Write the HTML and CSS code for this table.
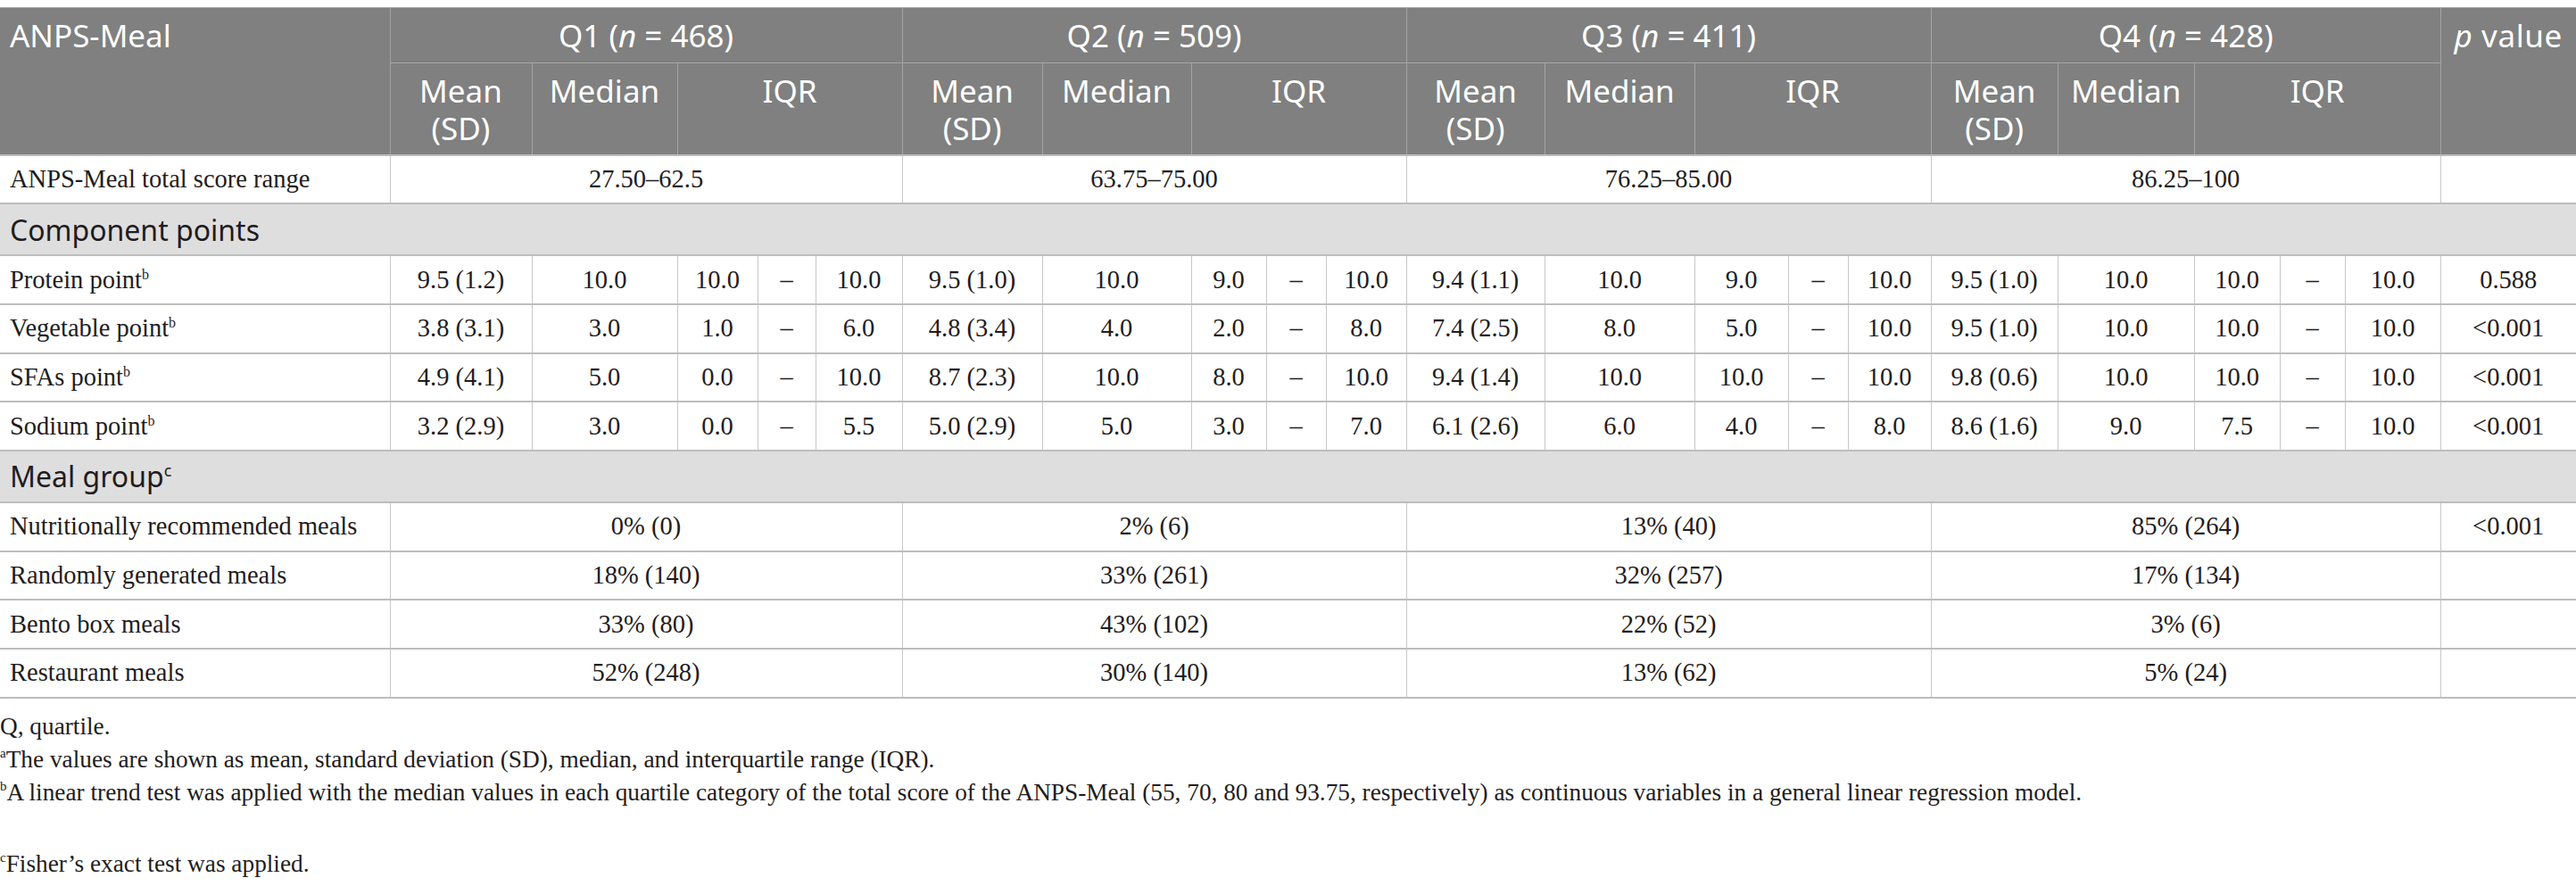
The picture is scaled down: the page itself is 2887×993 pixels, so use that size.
FILE: index.html
```html
<!DOCTYPE html>
<html lang="en">
<head>
    <meta charset="UTF-8">
    <title>ANPS-Meal quartiles</title>
    <link rel="stylesheet" href="styles.css">
</head>
<body>
    <table class="data-table">
        <colgroup>
            <col class="w-label">
            <col style="width:159px"><col style="width:163px"><col style="width:90px"><col style="width:65px"><col style="width:97px">
            <col style="width:157px"><col style="width:167px"><col style="width:84px"><col style="width:67px"><col style="width:90px">
            <col style="width:155px"><col style="width:168px"><col style="width:105px"><col style="width:67px"><col style="width:93px">
            <col style="width:142px"><col style="width:153px"><col style="width:96px"><col style="width:73px"><col style="width:107px">
            <col class="w-p">
        </colgroup>
        <thead>
            <tr class="head-top">
                <th rowspan="2" class="label">ANPS-Meal</th>
                <th colspan="5">Q1 (<i>n</i> = 468)</th>
                <th colspan="5">Q2 (<i>n</i> = 509)</th>
                <th colspan="5">Q3 (<i>n</i> = 411)</th>
                <th colspan="5">Q4 (<i>n</i> = 428)</th>
                <th rowspan="2" class="pval"><i>p</i> value</th>
            </tr>
            <tr class="head-sub">
                <th>Mean (SD)</th><th>Median</th><th colspan="3">IQR</th>
                <th>Mean (SD)</th><th>Median</th><th colspan="3">IQR</th>
                <th>Mean (SD)</th><th>Median</th><th colspan="3">IQR</th>
                <th>Mean (SD)</th><th>Median</th><th colspan="3">IQR</th>
            </tr>
        </thead>
        <tbody>
            <tr>
                <td class="label">ANPS-Meal total score range</td>
                <td colspan="5">27.50–62.5</td>
                <td colspan="5">63.75–75.00</td>
                <td colspan="5">76.25–85.00</td>
                <td colspan="5">86.25–100</td>
                <td></td>
            </tr>
            <tr class="section">
                <td colspan="22">Component points</td>
            </tr>
            <tr>
                <td class="label">Protein point<sup>b</sup></td>
                <td>9.5 (1.2)</td><td>10.0</td><td>10.0</td><td>–</td><td>10.0</td>
                <td>9.5 (1.0)</td><td>10.0</td><td>9.0</td><td>–</td><td>10.0</td>
                <td>9.4 (1.1)</td><td>10.0</td><td>9.0</td><td>–</td><td>10.0</td>
                <td>9.5 (1.0)</td><td>10.0</td><td>10.0</td><td>–</td><td>10.0</td>
                <td>0.588</td>
            </tr>
            <tr>
                <td class="label">Vegetable point<sup>b</sup></td>
                <td>3.8 (3.1)</td><td>3.0</td><td>1.0</td><td>–</td><td>6.0</td>
                <td>4.8 (3.4)</td><td>4.0</td><td>2.0</td><td>–</td><td>8.0</td>
                <td>7.4 (2.5)</td><td>8.0</td><td>5.0</td><td>–</td><td>10.0</td>
                <td>9.5 (1.0)</td><td>10.0</td><td>10.0</td><td>–</td><td>10.0</td>
                <td>&lt;0.001</td>
            </tr>
            <tr>
                <td class="label">SFAs point<sup>b</sup></td>
                <td>4.9 (4.1)</td><td>5.0</td><td>0.0</td><td>–</td><td>10.0</td>
                <td>8.7 (2.3)</td><td>10.0</td><td>8.0</td><td>–</td><td>10.0</td>
                <td>9.4 (1.4)</td><td>10.0</td><td>10.0</td><td>–</td><td>10.0</td>
                <td>9.8 (0.6)</td><td>10.0</td><td>10.0</td><td>–</td><td>10.0</td>
                <td>&lt;0.001</td>
            </tr>
            <tr>
                <td class="label">Sodium point<sup>b</sup></td>
                <td>3.2 (2.9)</td><td>3.0</td><td>0.0</td><td>–</td><td>5.5</td>
                <td>5.0 (2.9)</td><td>5.0</td><td>3.0</td><td>–</td><td>7.0</td>
                <td>6.1 (2.6)</td><td>6.0</td><td>4.0</td><td>–</td><td>8.0</td>
                <td>8.6 (1.6)</td><td>9.0</td><td>7.5</td><td>–</td><td>10.0</td>
                <td>&lt;0.001</td>
            </tr>
            <tr class="section">
                <td colspan="22">Meal group<sup>c</sup></td>
            </tr>
            <tr>
                <td class="label">Nutritionally recommended meals</td>
                <td colspan="5">0% (0)</td>
                <td colspan="5">2% (6)</td>
                <td colspan="5">13% (40)</td>
                <td colspan="5">85% (264)</td>
                <td>&lt;0.001</td>
            </tr>
            <tr>
                <td class="label">Randomly generated meals</td>
                <td colspan="5">18% (140)</td>
                <td colspan="5">33% (261)</td>
                <td colspan="5">32% (257)</td>
                <td colspan="5">17% (134)</td>
                <td></td>
            </tr>
            <tr>
                <td class="label">Bento box meals</td>
                <td colspan="5">33% (80)</td>
                <td colspan="5">43% (102)</td>
                <td colspan="5">22% (52)</td>
                <td colspan="5">3% (6)</td>
                <td></td>
            </tr>
            <tr>
                <td class="label">Restaurant meals</td>
                <td colspan="5">52% (248)</td>
                <td colspan="5">30% (140)</td>
                <td colspan="5">13% (62)</td>
                <td colspan="5">5% (24)</td>
                <td></td>
            </tr>
        </tbody>
    </table>

    <div class="footnotes">
        <p>Q, quartile.</p>
        <p><sup>a</sup>The values are shown as mean, standard deviation (SD), median, and interquartile range (IQR).</p>
        <p><sup>b</sup>A linear trend test was applied with the median values in each quartile category of the total score of the ANPS-Meal (55, 70, 80 and 93.75, respectively) as continuous variables in a general linear regression model.</p>
        <p class="spaced"><sup>c</sup>Fisher’s exact test was applied.</p>
    </div>
</body>
</html>
```

FILE: styles.css
```css
body {
    margin: 8px 0 0 0;
    background-color: #fff;
    color: #1f1c1d;
    font-family: "Liberation Serif", "Times New Roman", serif;
}

.data-table {
    width: 2887px;
    table-layout: fixed;
    border-collapse: collapse;
    border-top: 1px solid #b9b9b9;
    border-bottom: 2px solid #bdbdbd;
}

.w-label {
    width: 437px;
}

.w-p {
    width: 152px;
}

/* header */
.data-table th {
    background-color: #7f807f;
    color: #fff;
    font-family: "Noto Sans", "Open Sans", sans-serif;
    font-weight: normal;
    font-size: 35px;
    line-height: 42px;
    padding: 10px 8px 0;
    vertical-align: top;
    text-align: center;
    border: 1px solid #a4a5a4;
}

.data-table th.label {
    text-align: left;
    padding-left: 11px;
    border-left: none;
}

.data-table th.pval {
    padding: 10px 0 0;
    letter-spacing: 0.6px;
    border-right: 1px solid #b9b9b9;
}

.head-top {
    height: 62px;
}

.head-sub {
    height: 103px;
}

/* body */
.data-table td {
    font-size: 28.5px;
    height: 52.7px;
    padding: 0 4px;
    text-align: center;
    vertical-align: middle;
    border-top: 2px solid #bdbdbd;
    border-bottom: 2px solid #bdbdbd;
    border-left: 1px solid #c8c8c8;
    border-right: 1px solid #c8c8c8;
    white-space: nowrap;
}

.data-table td.label {
    text-align: left;
    padding-left: 11px;
    border-left: none;
}

.data-table td sup {
    font-size: 16px;
    line-height: 0;
}

.section td {
    background-color: #dfdedf;
    font-family: "Noto Sans", "Open Sans", sans-serif;
    font-size: 32px;
    height: 56px;
    text-align: left;
    padding-left: 11px;
    border-left: none;
}

.section td sup {
    font-size: 18px;
}

/* notes under the table */
.footnotes {
    margin-top: 13px;
    font-size: 27.3px;
    line-height: 37px;
}

.footnotes p {
    margin: 0;
}

.footnotes sup {
    font-size: 15px;
    line-height: 0;
    vertical-align: baseline;
    position: relative;
    top: -0.7em;
}

.footnotes .spaced {
    margin-top: 43px;
}
```
